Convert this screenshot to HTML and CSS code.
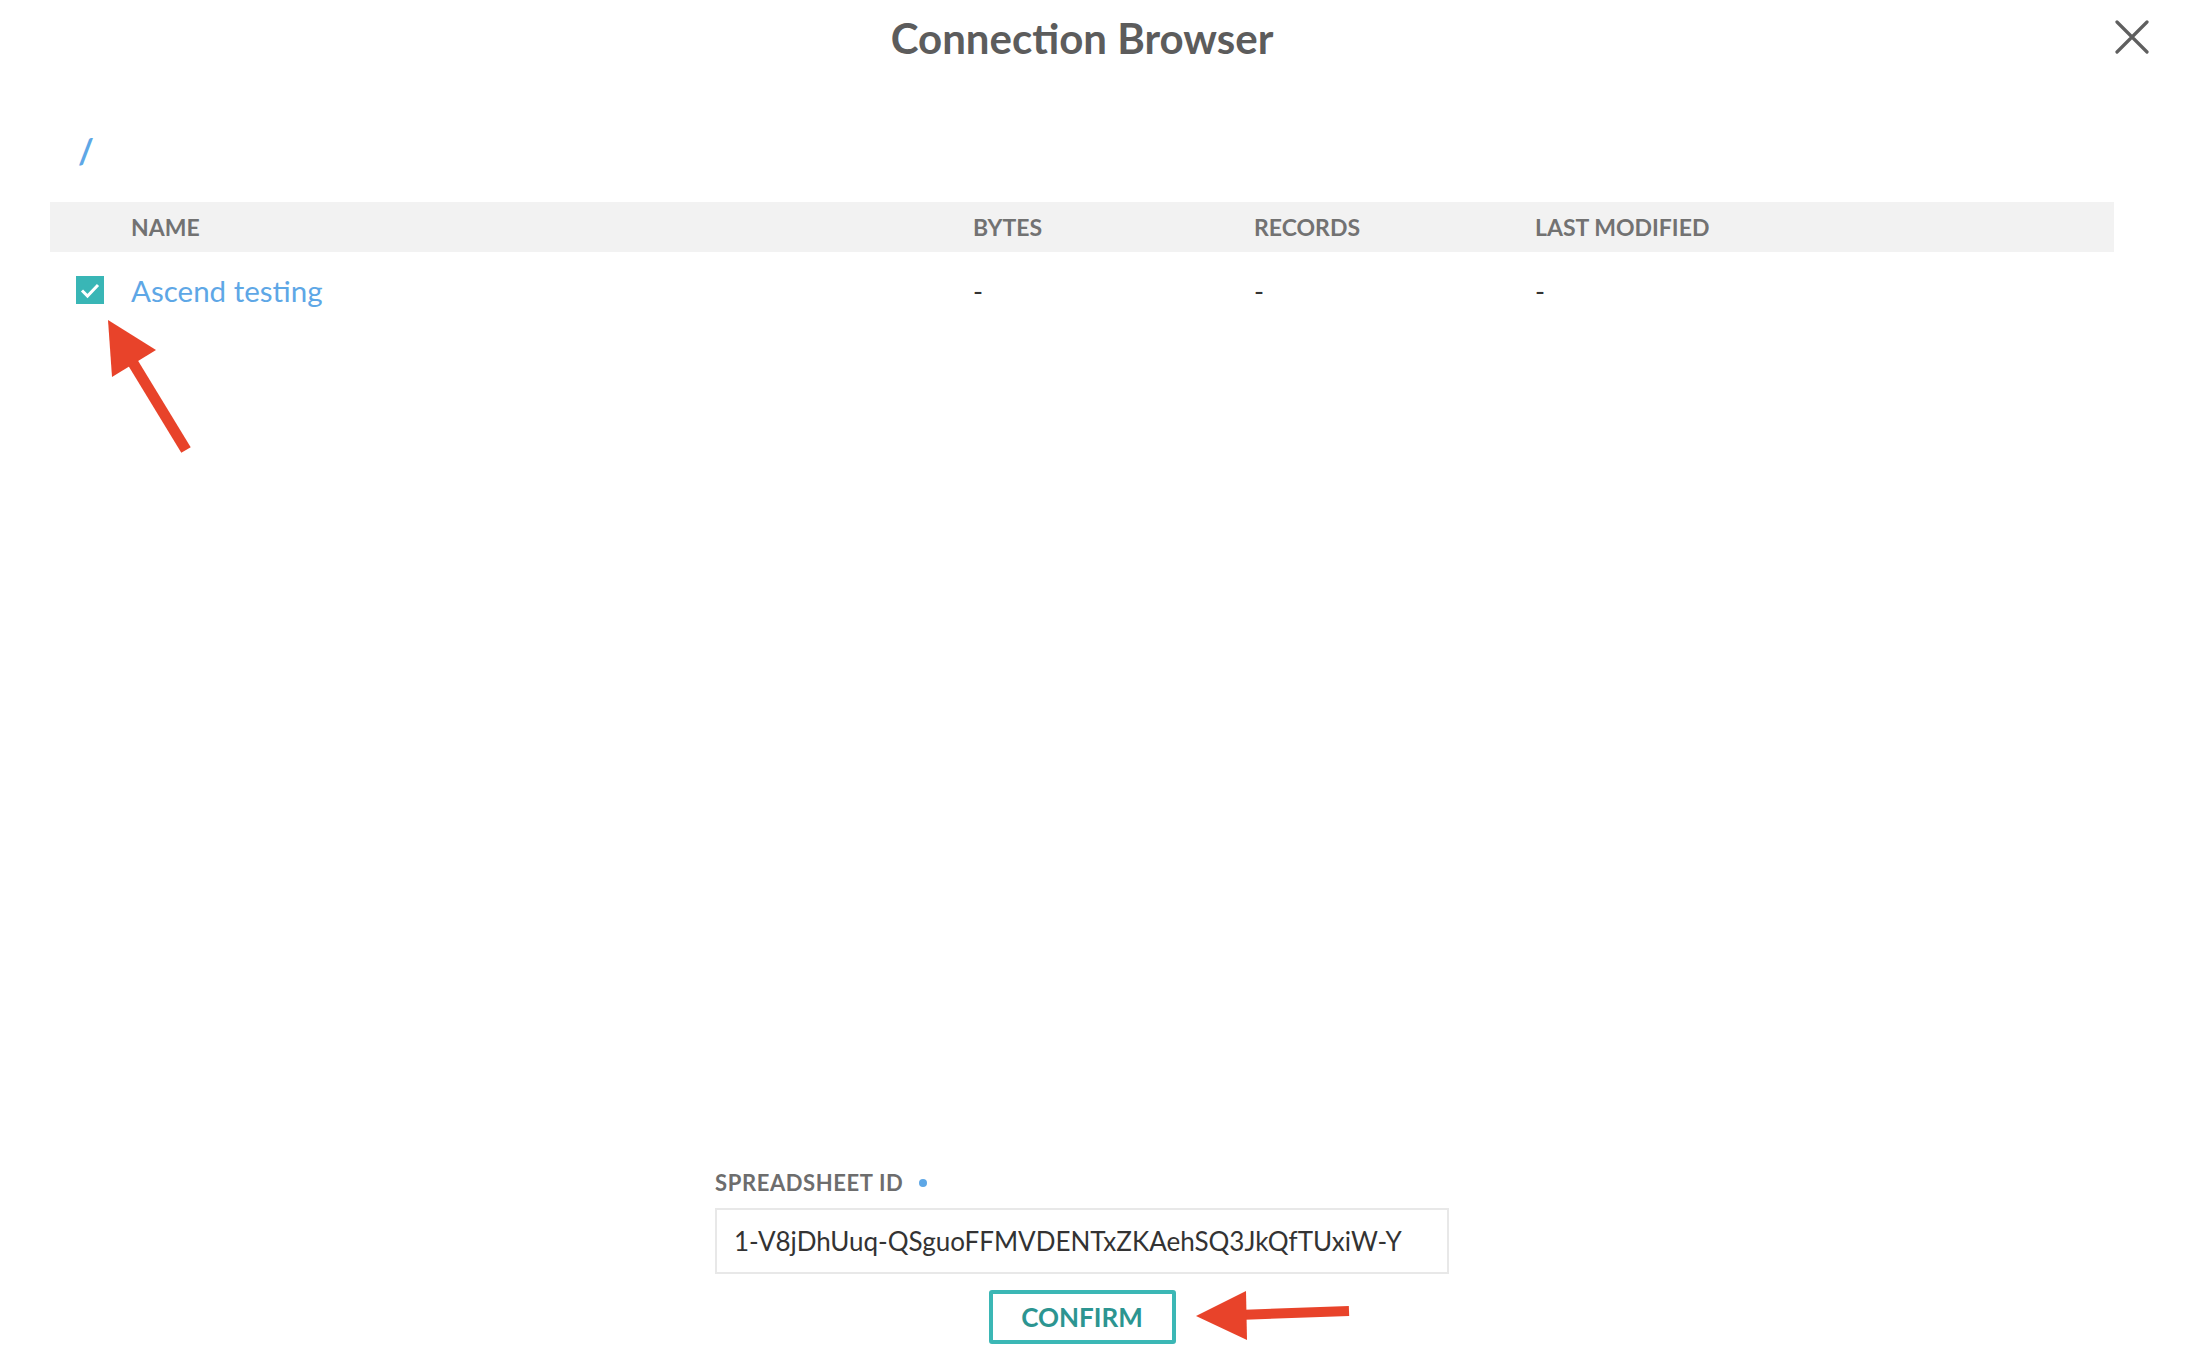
FILE: index.html
```html
<!DOCTYPE html>
<html lang="en">
<head>
    <meta charset="UTF-8">
    <meta name="viewport" content="width=device-width, initial-scale=1.0">
    <title>Connection Browser</title>
    <link rel="stylesheet" href="styles.css">
</head>
<body>
    <div class="modal">
        <div class="modal-header">
            <h2>Connection Browser</h2>
            <button class="close" aria-label="Close">
                <svg width="34" height="34" viewBox="0 0 34 34">
                    <path d="M2 2 L32 32 M32 2 L2 32" stroke="#5f5f5f" stroke-width="3.2" stroke-linecap="round" fill="none"/>
                </svg>
            </button>
        </div>

        <div class="crumbs"><a href="#">/</a></div>

        <div class="table">
            <div class="row head">
                <div class="cell check"></div>
                <div class="cell name">NAME</div>
                <div class="cell num">BYTES</div>
                <div class="cell num">RECORDS</div>
                <div class="cell date">LAST MODIFIED</div>
            </div>
            <div class="row">
                <div class="cell check">
                    <span class="checkbox">
                        <svg width="28" height="28" viewBox="0 0 28 28">
                            <path d="M6 14.5 L11.5 20 L22 9" stroke="#fff" stroke-width="3" fill="none"/>
                        </svg>
                    </span>
                </div>
                <div class="cell name"><a href="#">Ascend testing</a></div>
                <div class="cell num">-</div>
                <div class="cell num">-</div>
                <div class="cell date">-</div>
            </div>
        </div>

        <div class="footer">
            <div class="field">
                <label for="sheet">SPREADSHEET ID <span class="dot"></span></label>
                <input id="sheet" type="text" value="1-V8jDhUuq-QSguoFFMVDENTxZKAehSQ3JkQfTUxiW-Y">
            </div>
            <button class="confirm">CONFIRM</button>
        </div>
    </div>

    <svg class="marks" width="2188" height="1358" viewBox="0 0 2188 1358">
        <line x1="186" y1="450" x2="130" y2="358" stroke="#e8432a" stroke-width="11"/>
        <polygon points="108,320 112,377 156,350" fill="#e8432a"/>
        <line x1="1349" y1="1311" x2="1238" y2="1315" stroke="#e8432a" stroke-width="10"/>
        <polygon points="1196,1316 1246,1291 1247,1340" fill="#e8432a"/>
    </svg>
</body>
</html>
```

FILE: styles.css
```css
body {
    margin: 0;
    font-family: Lato, "Open Sans", Arial, sans-serif;
    background: #fff;
    color: #333;
}
.modal {
    position: relative;
    height: 100vh;
    box-sizing: border-box;
    padding: 0 74px 14px 50px;
    display: flex;
    flex-direction: column;
}
.modal-header {
    height: 76px;
    display: flex;
    align-items: center;
    justify-content: center;
}
h2 {
    margin: 0;
    font-size: 42px;
    font-weight: 700;
    color: #5c5c5c;
}
.close {
    position: absolute;
    top: 20px;
    right: 39px;
    padding: 0;
    border: none;
    background: none;
    cursor: pointer;
}
.crumbs {
    height: 126px;
    padding-left: 28px;
    font-size: 34px;
    line-height: 1;
    padding-top: 58px;
    box-sizing: border-box;
}
.crumbs a {
    color: #5ea7e6;
    text-decoration: none;
    font-weight: 700;
}
.table {
    flex: 1;
}
.row {
    display: flex;
    align-items: center;
    height: 76px;
    font-size: 27px;
}
.row.head {
    height: 50px;
    background: #f2f2f2;
    font-size: 23px;
    font-weight: 700;
    color: #727272;
}
.cell.check {
    width: 81px;
    padding-left: 26px;
    box-sizing: border-box;
    display: flex;
}
.cell.name {
    width: 842px;
}
.cell.num {
    width: 281px;
}
.checkbox {
    width: 28px;
    height: 28px;
    background: #39b6b6;
    display: block;
}
.checkbox svg {
    display: block;
}
.cell.name a {
    color: #5ea7e6;
    text-decoration: none;
    font-size: 29.5px;
}
.footer {
    display: flex;
    flex-direction: column;
    align-items: center;
}
.field {
    width: 734px;
}
label {
    display: block;
    font-size: 22px;
    letter-spacing: 0.6px;
    font-weight: 700;
    color: #6d6d6d;
    margin-bottom: 12px;
}
.dot {
    display: inline-block;
    width: 8px;
    height: 8px;
    border-radius: 50%;
    background: #5ea7e6;
    margin-left: 10px;
    vertical-align: middle;
    position: relative;
    top: -2px;
}
input {
    width: 100%;
    height: 66px;
    box-sizing: border-box;
    border: 2px solid #e8e8e8;
    padding: 0 17px;
    font-family: inherit;
    font-size: 26px;
    color: #333;
    outline: none;
}
.confirm {
    margin-top: 16px;
    width: 187px;
    height: 54px;
    border: 4px solid #3bb7b5;
    border-radius: 3px;
    background: #fff;
    color: #2c9591;
    font-family: inherit;
    font-size: 26px;
    font-weight: 700;
    cursor: pointer;
}
.marks {
    position: absolute;
    top: 0;
    left: 0;
    pointer-events: none;
}
```
